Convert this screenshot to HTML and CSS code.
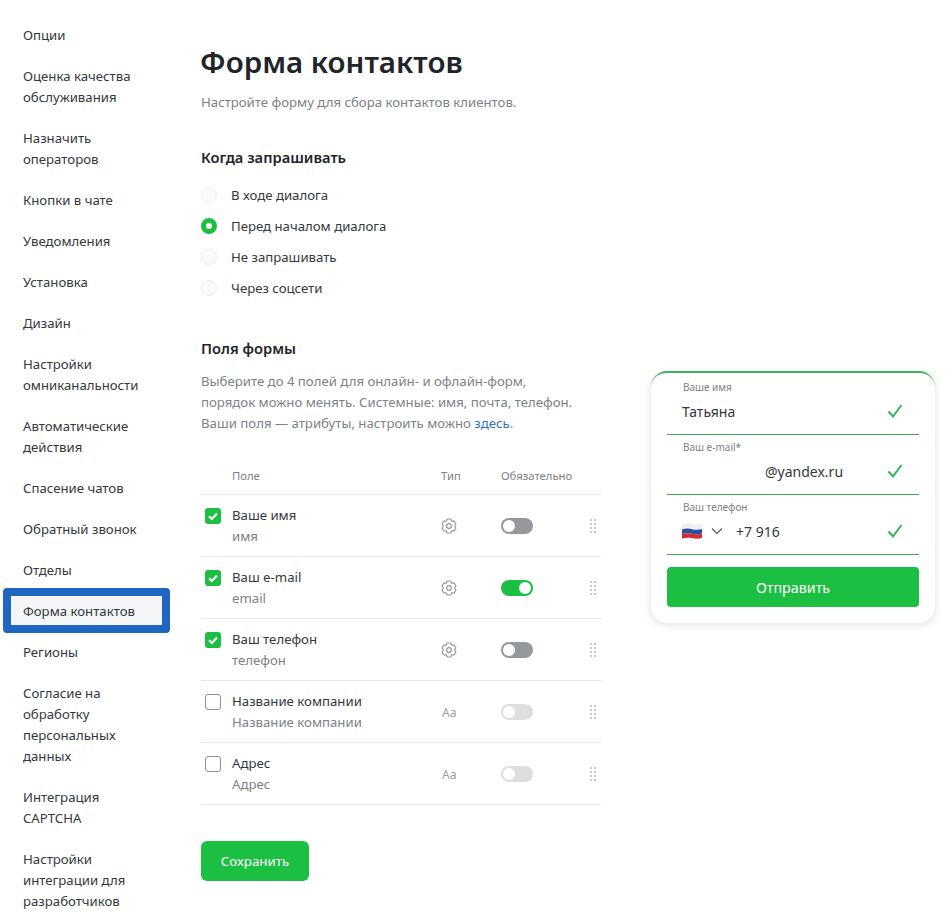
FILE: index.html
```html
<!DOCTYPE html>
<html>
<head>
  <meta charset="utf-8">
  <title>Форма контактов</title>
  <link rel="stylesheet" href="styles.css">
</head>
<body>
  <div class="page">
    <nav class="sidebar">
      <a class="nav-item">Опции</a>
      <a class="nav-item">Оценка качества обслуживания</a>
      <a class="nav-item">Назначить операторов</a>
      <a class="nav-item">Кнопки в чате</a>
      <a class="nav-item">Уведомления</a>
      <a class="nav-item">Установка</a>
      <a class="nav-item">Дизайн</a>
      <a class="nav-item">Настройки омниканальности</a>
      <a class="nav-item">Автоматические действия</a>
      <a class="nav-item">Спасение чатов</a>
      <a class="nav-item">Обратный звонок</a>
      <a class="nav-item">Отделы</a>
      <a class="nav-item active">Форма контактов</a>
      <a class="nav-item">Регионы</a>
      <a class="nav-item">Согласие на обработку персональных данных</a>
      <a class="nav-item">Интеграция CAPTCHA</a>
      <a class="nav-item">Настройки интеграции для разработчиков</a>
    </nav>

    <main class="content">
      <h1 class="title">Форма контактов</h1>
      <p class="subtitle">Настройте форму для сбора контактов клиентов.</p>

      <h2 class="section-title first">Когда запрашивать</h2>
      <div class="radios">
        <label class="radio"><span class="radio-mark"></span>В ходе диалога</label>
        <label class="radio"><span class="radio-mark on"></span>Перед началом диалога</label>
        <label class="radio"><span class="radio-mark"></span>Не запрашивать</label>
        <label class="radio"><span class="radio-mark"></span>Через соцсети</label>
      </div>

      <h2 class="section-title second">Поля формы</h2>
      <p class="desc">Выберите до 4 полей для онлайн- и офлайн-форм,<br>порядок можно менять. Системные: имя, почта, телефон.<br>Ваши поля — атрибуты, настроить можно <a class="link">здесь</a>.</p>

      <div class="table">
        <div class="row head">
          <span></span>
          <span>Поле</span>
          <span>Тип</span>
          <span>Обязательно</span>
          <span></span>
        </div>

        <div class="row">
          <span class="check on"><svg viewBox="0 0 16 16"><path d="M4 8.3l2.800 2.700L12 5.600"/></svg></span>
          <div class="field"><div class="field-name">Ваше имя</div><div class="field-sub">имя</div></div>
          <svg class="gear" viewBox="0 0 16 16"><path d="M6.260 1.010H9.740L10.800 3.150 13.180 3 14.920 6.020 13.600 8 14.920 9.980 13.180 13 10.800 12.850 9.740 14.990H6.260L5.200 12.850 2.820 13 1.080 9.980 2.400 8 1.080 6.020 2.820 3 5.200 3.150z"/><circle cx="8" cy="8" r="2.400"/></svg>
          <span class="toggle"></span>
          <svg class="drag" viewBox="0 0 6 14"><path d="M0 0h2v2H0zM4 0h2v2H4zM0 4h2v2H0zM4 4h2v2H4zM0 8h2v2H0zM4 8h2v2H4zM0 12h2v2H0zM4 12h2v2H4z"/></svg>
        </div>

        <div class="row">
          <span class="check on"><svg viewBox="0 0 16 16"><path d="M4 8.3l2.800 2.700L12 5.600"/></svg></span>
          <div class="field"><div class="field-name">Ваш e-mail</div><div class="field-sub">email</div></div>
          <svg class="gear" viewBox="0 0 16 16"><path d="M6.260 1.010H9.740L10.800 3.150 13.180 3 14.920 6.020 13.600 8 14.920 9.980 13.180 13 10.800 12.850 9.740 14.990H6.260L5.200 12.850 2.820 13 1.080 9.980 2.400 8 1.080 6.020 2.820 3 5.200 3.150z"/><circle cx="8" cy="8" r="2.400"/></svg>
          <span class="toggle on"></span>
          <svg class="drag" viewBox="0 0 6 14"><path d="M0 0h2v2H0zM4 0h2v2H4zM0 4h2v2H0zM4 4h2v2H4zM0 8h2v2H0zM4 8h2v2H4zM0 12h2v2H0zM4 12h2v2H4z"/></svg>
        </div>

        <div class="row">
          <span class="check on"><svg viewBox="0 0 16 16"><path d="M4 8.3l2.800 2.700L12 5.600"/></svg></span>
          <div class="field"><div class="field-name">Ваш телефон</div><div class="field-sub">телефон</div></div>
          <svg class="gear" viewBox="0 0 16 16"><path d="M6.260 1.010H9.740L10.800 3.150 13.180 3 14.920 6.020 13.600 8 14.920 9.980 13.180 13 10.800 12.850 9.740 14.990H6.260L5.200 12.850 2.820 13 1.080 9.980 2.400 8 1.080 6.020 2.820 3 5.200 3.150z"/><circle cx="8" cy="8" r="2.400"/></svg>
          <span class="toggle"></span>
          <svg class="drag" viewBox="0 0 6 14"><path d="M0 0h2v2H0zM4 0h2v2H4zM0 4h2v2H0zM4 4h2v2H4zM0 8h2v2H0zM4 8h2v2H4zM0 12h2v2H0zM4 12h2v2H4z"/></svg>
        </div>

        <div class="row">
          <span class="check"></span>
          <div class="field"><div class="field-name">Название компании</div><div class="field-sub">Название компании</div></div>
          <span class="type-text">Aa</span>
          <span class="toggle disabled"></span>
          <svg class="drag" viewBox="0 0 6 14"><path d="M0 0h2v2H0zM4 0h2v2H4zM0 4h2v2H0zM4 4h2v2H4zM0 8h2v2H0zM4 8h2v2H4zM0 12h2v2H0zM4 12h2v2H4z"/></svg>
        </div>

        <div class="row">
          <span class="check"></span>
          <div class="field"><div class="field-name">Адрес</div><div class="field-sub">Адрес</div></div>
          <span class="type-text">Aa</span>
          <span class="toggle disabled"></span>
          <svg class="drag" viewBox="0 0 6 14"><path d="M0 0h2v2H0zM4 0h2v2H4zM0 4h2v2H0zM4 4h2v2H4zM0 8h2v2H0zM4 8h2v2H4zM0 12h2v2H0zM4 12h2v2H4z"/></svg>
        </div>
      </div>

      <button class="save" type="button">Сохранить</button>
    </main>

    <aside class="preview">
      <div class="preview-field">
        <div class="preview-label">Ваше имя</div>
        <div class="preview-value">
          <span>Татьяна</span>
          <svg class="tick" viewBox="0 0 16 16"><path d="M1.500 8.500l4.500 5L14.500 2"/></svg>
        </div>
      </div>
      <div class="preview-field">
        <div class="preview-label">Ваш e-mail*</div>
        <div class="preview-value">
          <span class="email">@yandex.ru</span>
          <svg class="tick" viewBox="0 0 16 16"><path d="M1.500 8.500l4.500 5L14.500 2"/></svg>
        </div>
      </div>
      <div class="preview-field">
        <div class="preview-label">Ваш телефон</div>
        <div class="preview-value">
          <svg class="flag" viewBox="0 0 20 16">
            <path fill="#eef0f2" d="M0 2C4 .5 7 .3 10 1s7 .8 10-.5V6c-3 1-7 .9-10 .2S4 5.600 0 6.500z"/>
            <path fill="#2a4fa3" d="M0 6.500C4 5.200 7 5.500 10 6.200s7 .8 10-.2v4.500c-3 1-7 .9-10 .2S4 10 0 11z"/>
            <path fill="#cf2e32" d="M0 11c4-1 7-1 10-.3s7 .8 10-.2V15c-3 1-7 .8-10 .1s-6-.6-10 .4z"/>
          </svg>
          <svg class="chevron" viewBox="0 0 12 8"><path d="M1 1.500l5 5 5-5"/></svg>
          <span class="phone">+7 916</span>
          <svg class="tick" viewBox="0 0 16 16"><path d="M1.500 8.500l4.500 5L14.500 2"/></svg>
        </div>
      </div>
      <button class="send" type="button">Отправить</button>
    </aside>
  </div>
</body>
</html>
```

FILE: styles.css
```css
* {
  box-sizing: border-box;
}

body {
  margin: 0;
  background-color: #fff;
  font-family: "Noto Sans", sans-serif;
  font-size: 13.2px;
  line-height: 21px;
  color: #33383d;
}

.page {
  display: flex;
  align-items: flex-start;
  height: 924px;
  overflow: hidden;
}

/* Sidebar */
.sidebar {
  width: 170px;
  flex-shrink: 0;
  padding: 14.5px 8px 0 11px;
}

.nav-item {
  position: relative;
  display: block;
  padding: 10px 20px 10px 12px;
  color: #33383d;
}

.nav-item.active {
  background-color: #f5f6f8;
}

/* blue marker drawn over the screenshot */
.nav-item.active::after {
  content: "";
  position: absolute;
  top: -2.5px;
  left: -8px;
  right: -8px;
  bottom: -1.5px;
  border: 8px solid #1e66c0;
  border-radius: 4px;
}

/* Main column */
.content {
  width: 400px;
  flex-shrink: 0;
  margin-left: 31px;
  padding-top: 41px;
}

.title {
  margin: 0 0 0 -1px;
  font-size: 29.500px;
  line-height: 42px;
  font-weight: 600;
  color: #212529;
}

.subtitle {
  margin: 9px 0 0;
  color: #7c8288;
}

.section-title {
  margin: 0;
  font-size: 14.700px;
  line-height: 22px;
  font-weight: 600;
  color: #212529;
}

.section-title.first {
  margin-top: 33px;
}

.section-title.second {
  margin-top: 33px;
}

.radios {
  margin-top: 12px;
}

.radio {
  display: flex;
  align-items: center;
  gap: 14px;
  height: 31px;
  color: #33383d;
}

.radio-mark {
  width: 16px;
  height: 16px;
  margin-bottom: 2px;
  border-radius: 50%;
  background-color: #fafafa;
  border: 1px solid #eeeff0;
}

.radio-mark.on {
  background-color: #fff;
  border: 5px solid #1bbf41;
}

.desc {
  margin: 12px 0 0;
  color: #7c8288;
}

.link {
  color: #2f72c4;
}

/* Fields table */
.table {
  margin-top: 21px;
}

.row {
  display: grid;
  grid-template-columns: 31px 209px 60px 88px 12px;
  align-items: center;
  height: 62px;
  border-bottom: 1px solid #e6e7e9;
}

.row.head {
  height: 40px;
  padding-top: 1px;
  font-size: 11.300px;
  color: #7c8288;
}

.check {
  display: block;
  align-self: start;
  width: 16px;
  height: 16px;
  margin: 13px 0 0 4px;
  border: 1px solid #8d9297;
  border-radius: 3px;
  background-color: #fff;
}

.check.on {
  border: none;
  background-color: #1bbf41;
}

.check svg {
  display: block;
  width: 16px;
  height: 16px;
  fill: none;
  stroke: #fff;
  stroke-width: 2.200;
}

.field-name {
  color: #33383d;
}

.field-sub {
  color: #7c8288;
}

.gear {
  width: 16px;
  height: 16px;
  fill: none;
  stroke: #94989c;
  stroke-width: 1.200;
  stroke-linejoin: round;
}

.type-text {
  margin: 1px 0 0 1px;
  font-size: 12px;
  color: #9a9ea2;
}

.toggle {
  position: relative;
  display: block;
  width: 32px;
  height: 16px;
  border-radius: 8px;
  background-color: #95999e;
}

.toggle::after {
  content: "";
  position: absolute;
  top: 2px;
  left: 2px;
  width: 12px;
  height: 12px;
  border-radius: 50%;
  background-color: #fff;
}

.toggle.on {
  background-color: #1bbf41;
}

.toggle.on::after {
  left: 18px;
}

.toggle.disabled {
  background-color: #dcdee0;
}

.drag {
  display: block;
  width: 6px;
  height: 14px;
  margin-left: 1px;
  fill: #c8cacc;
}

.save {
  display: block;
  width: 108px;
  height: 40px;
  margin-top: 36px;
  border: none;
  border-radius: 6px;
  background-color: #1bbf41;
  color: #fff;
  font-family: "Noto Sans", sans-serif;
  font-size: 13.300px;
  font-weight: 400;
}

/* Form preview card */
.preview {
  width: 284px;
  flex-shrink: 0;
  margin: 371px 0 0 50px;
  padding: 2px 16px 16px;
  border-top: 2px solid #3db558;
  border-radius: 16px;
  background-color: #fff;
  box-shadow: 0 2px 8px rgba(0, 0, 0, 0.12);
}

.preview-field {
  height: 60px;
  padding: 4px 0 0 15px;
  border-bottom: 1px solid #3fa957;
}

.preview-label {
  padding-left: 1px;
  font-size: 10px;
  line-height: 17px;
  color: #7c8288;
}

.preview-value {
  display: flex;
  align-items: center;
  height: 30px;
  padding-right: 16px;
  font-size: 14px;
  color: #33383d;
}

.email {
  margin-left: 83px;
}

.phone {
  margin-left: 13px;
}

.tick {
  width: 16px;
  height: 16px;
  margin-left: auto;
  fill: none;
  stroke: #35b653;
  stroke-width: 2;
}

.flag {
  width: 20px;
  height: 16px;
}

.chevron {
  width: 12px;
  height: 8px;
  margin-left: 9px;
  fill: none;
  stroke: #555a5f;
  stroke-width: 1.200;
}

.send {
  display: block;
  width: 100%;
  height: 40px;
  margin-top: 12px;
  border: none;
  border-radius: 4px;
  background-color: #1bbf41;
  color: #fff;
  font-family: "Noto Sans", sans-serif;
  font-size: 14.300px;
  font-weight: 400;
}
```
